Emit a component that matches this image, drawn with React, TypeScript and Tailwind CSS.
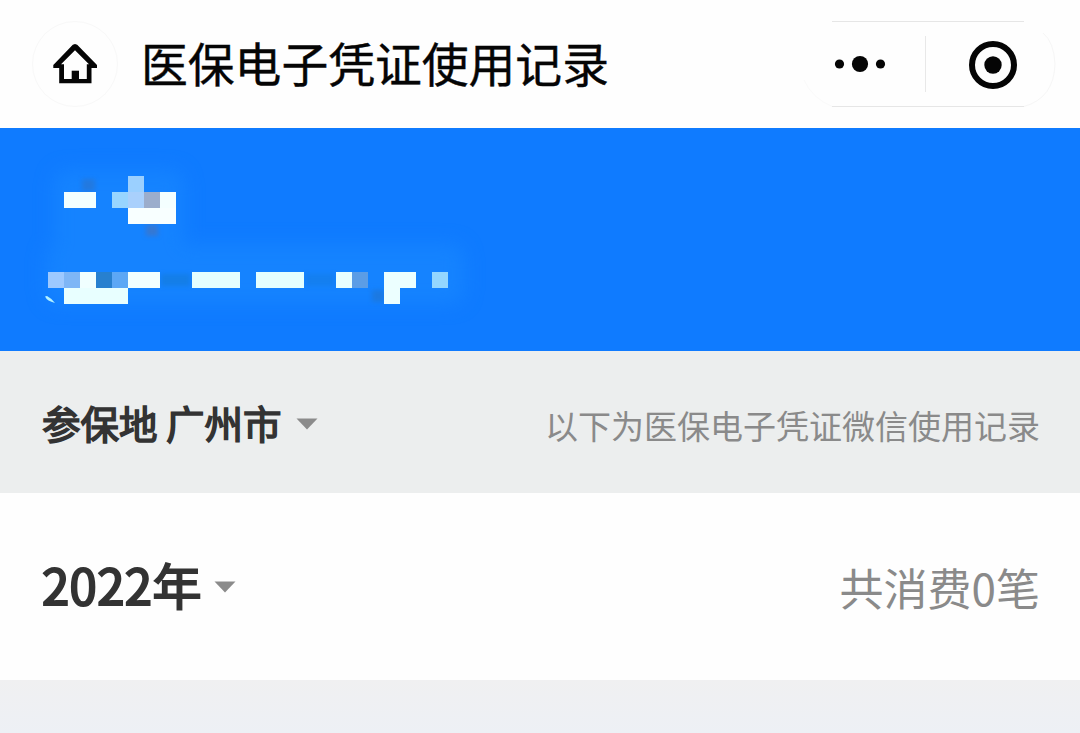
const maskCells = [
    { x: 64, y: 192, w: 32, h: 16, fill: '#f2ffff' },
    { x: 128, y: 176, w: 16, h: 16, fill: '#9bd0ff' },
    { x: 112, y: 192, w: 16, h: 16, fill: '#98d5ff' },
    { x: 128, y: 192, w: 16, h: 16, fill: '#a9d0fc' },
    { x: 144, y: 192, w: 16, h: 16, fill: '#9badcc' },
    { x: 160, y: 192, w: 16, h: 16, fill: '#f4ffff' },
    { x: 128, y: 208, w: 48, h: 16, fill: '#f8ffff' },
    { x: 48, y: 272, w: 16, h: 16, fill: '#9dc9ff' },
    { x: 64, y: 272, w: 16, h: 16, fill: '#7eb6f6' },
    { x: 80, y: 272, w: 16, h: 16, fill: '#f0ffff' },
    { x: 96, y: 272, w: 16, h: 16, fill: '#2780cf' },
    { x: 112, y: 272, w: 16, h: 16, fill: '#5ca7f5' },
    { x: 128, y: 272, w: 32, h: 16, fill: '#f1ffff' },
    { x: 192, y: 272, w: 48, h: 16, fill: '#e4ffff' },
    { x: 256, y: 272, w: 48, h: 16, fill: '#e4ffff' },
    { x: 336, y: 272, w: 16, h: 16, fill: '#e8ffff' },
    { x: 352, y: 272, w: 16, h: 16, fill: '#5b9de6' },
    { x: 384, y: 272, w: 32, h: 16, fill: '#ecffff' },
    { x: 432, y: 272, w: 16, h: 16, fill: '#93d6ff' },
    { x: 64, y: 288, w: 64, h: 16, fill: '#e8ffff' },
    { x: 384, y: 288, w: 16, h: 16, fill: '#ecffff' },
]

const shadowCells = [
    { x: 82, y: 179, w: 13, h: 12, fill: '#2279e0' },
    { x: 146, y: 225, w: 12, h: 11, fill: '#3578d4' },
    { x: 161, y: 274, w: 29, h: 12, fill: '#147ee8' },
    { x: 306, y: 274, w: 28, h: 12, fill: '#147ff0' },
    { x: 372, y: 290, w: 12, h: 12, fill: '#1b79e2' },
]

const HomeIcon = () => (
    <svg className="w-[44px] h-[40px]" viewBox="0 0 44 40">
        <path
            d="M22 0L24.2 0.8L44 21V24H38.5V39.3H6.2V24H0.3V21L19.8 0.8ZM22 6.2L8 20.3H11V35.1H33.8V20.3H36L22 6.2Z"
            fill="#050505"
            fillRule="evenodd"
        />
        <path d="M18.7 26.7H26V38H18.7Z" fill="#050505" />
    </svg>
)

const Caret = () => (
    <svg className="w-[22px] h-[12px]" viewBox="0 0 22 12">
        <path d="M0.5 0.5H21.5L11 11.5Z" fill="#8b8b8b" />
    </svg>
)

const Capsule = () => (
    <svg className="w-[260px] h-[88px]" viewBox="800 20 260 88">
        <path d="M832 21.5H1024" stroke="#e6e6e6" />
        <path d="M832 106.5H1024" stroke="#e6e6e6" />
        <path d="M1024 106.5Q1054 98 1055 64Q1054 42 1043 33" stroke="#f6f6f6" fill="none" />
        <path d="M832 106.5Q812 98 804 80" stroke="#fafafa" fill="none" />
        <path d="M925.5 36V92" stroke="#e8e8e8" />
        <circle cx="839.5" cy="64" r="4.6" fill="#050505" />
        <circle cx="860" cy="64" r="8.1" fill="#050505" />
        <circle cx="880.5" cy="64" r="4.6" fill="#050505" />
        <circle cx="993" cy="65" r="21" fill="none" stroke="#050505" strokeWidth="6" />
        <circle cx="993" cy="65" r="8.7" fill="#050505" />
    </svg>
)

const MaskedProfile = () => (
    <svg className="block w-full h-full" viewBox="0 128 1080 223">
        <defs>
            <filter id="halo" x="-20%" y="-40%" width="140%" height="180%" colorInterpolationFilters="sRGB">
                <feGaussianBlur stdDeviation="9" />
            </filter>
            <filter id="soft" x="-20%" y="-40%" width="140%" height="180%" colorInterpolationFilters="sRGB">
                <feGaussianBlur stdDeviation="2" />
            </filter>
        </defs>
        <g fill="#1583ff" filter="url(#halo)">
            <rect x="54" y="170" width="130" height="80" rx="14" />
            <rect x="46" y="244" width="418" height="60" rx="14" />
        </g>
        <g filter="url(#soft)">
            {shadowCells.map((cell) => (
                <rect key={`${cell.x}-${cell.y}`} x={cell.x} y={cell.y} width={cell.w} height={cell.h} fill={cell.fill} />
            ))}
        </g>
        {maskCells.map((cell) => (
            <rect key={`${cell.x}-${cell.y}`} x={cell.x} y={cell.y} width={cell.w} height={cell.h} fill={cell.fill} />
        ))}
        <path d="M45 296.5Q47 301 55 303Q51 298 47 296Z" fill="#b4f2ff" />
    </svg>
)

const App = () => {
    return (
        <div className="flex flex-col h-[733px] w-[1080px] overflow-hidden bg-[#eef0f4] whitespace-nowrap font-['Noto_Sans_CJK_SC',sans-serif]">
            <header className="flex items-center h-[128px] shrink-0 bg-[#fefefe] pl-[32px] pr-[20px]">
                <div className="flex items-center justify-center w-[86px] h-[86px] rounded-full border border-[#f8f8f8]">
                    <HomeIcon />
                </div>
                <h1 className="ml-[23px] mb-[3px] text-[46.8px] leading-none [-webkit-text-stroke:0.4px_#050505] text-[#050505]">医保电子凭证使用记录</h1>
                <div className="ml-auto">
                    <Capsule />
                </div>
            </header>

            <section className="h-[223px] shrink-0 bg-[#0f7bff]">
                <MaskedProfile />
            </section>

            <section className="flex items-center justify-between h-[142px] shrink-0 bg-[#eceeee] pl-[42px] pr-[40px] pt-[3px]">
                <div className="flex items-center gap-[14px]">
                    <span className="mb-[2px] text-[38.5px] leading-none [-webkit-text-stroke:1.6px_#333333] text-[#333333]">参保地 广州市</span>
                    <Caret />
                </div>
                <span className="pt-[4px] text-[33px] leading-none text-[#8a8a8a]">以下为医保电子凭证微信使用记录</span>
            </section>

            <section className="flex items-center justify-between h-[187px] shrink-0 bg-[#fefefe] pl-[42px] pr-[40px]">
                <div className="flex items-center gap-[12px]">
                    <span className="mb-[7px] text-[49px] leading-none tracking-[0.4px] [-webkit-text-stroke:2.1px_#333333] text-[#333333]">2022年</span>
                    <Caret />
                </div>
                <span className="text-[44px] leading-none text-[#8a8a8a]">共消费0笔</span>
            </section>
            <div className="grow bg-linear-to-b from-[#f0f0f1] to-[#edf0f5]" />
        </div>
    );
};

export default App;
